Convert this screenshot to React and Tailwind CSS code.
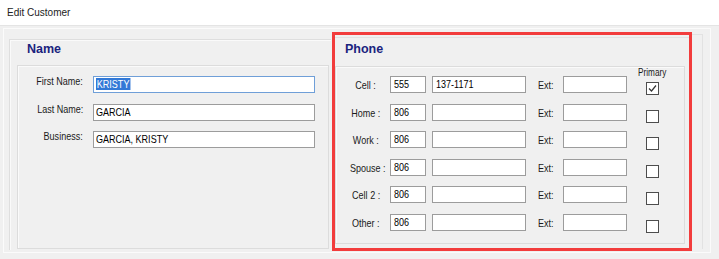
import React from "react";

const FONT = "font-['Liberation_Sans',Arial,sans-serif]";

function TL({ children, className = "" }) {
  return <span className={`inline-block whitespace-nowrap scale-x-[0.82] origin-left ${className}`}>{children}</span>;
}
function TR({ children }) {
  return <span className="inline-block whitespace-nowrap scale-x-[0.82] origin-right">{children}</span>;
}
function TC({ children }) {
  return <span className="inline-block whitespace-nowrap scale-x-[0.82] origin-center">{children}</span>;
}

function Box({ children, className = "", focus = false }) {
  return (
    <div
      className={`h-[17px] border ${focus ? "border-[#6f9fd8]" : "border-[#9c9c9c]"} bg-white text-[11px] leading-[15px] text-black whitespace-nowrap overflow-hidden ${className}`}
    >
      {children}
    </div>
  );
}

function Check({ checked }) {
  return (
    <div className="w-[13px] h-[13px] border border-[#4d4d4d] bg-white">
      {checked && (
        <svg width="11" height="11" viewBox="0 0 11 11" className="block">
          <path d="M2 5.5 L4.5 8 L9 2.5" fill="none" stroke="#333" strokeWidth="1.2" />
        </svg>
      )}
    </div>
  );
}

function NameRow({ label, children, focus }) {
  return (
    <div className="flex h-[17px] items-start">
      <div className="w-[65px] text-right text-[11px] leading-[11px] text-[#1a1a1a]">
        <TR>{label}</TR>
      </div>
      <Box className="ml-[10px] w-[222px] pl-[2px]" focus={focus}>
        {children}
      </Box>
    </div>
  );
}

function PhoneRow({ label, area, number, primary, first }) {
  return (
    <div className="flex h-[17px] items-start">
      <div className="w-[40px] pt-[1px] text-center text-[11px] leading-[17px] text-[#1a1a1a]">
        <TC>{label}</TC>
      </div>
      <Box className="ml-[4px] w-[36px] pl-[3px]">
        <TL>{area}</TL>
      </Box>
      <Box className="ml-[6px] w-[94px] pl-[3px]">
        <TL>{number}</TL>
      </Box>
      <div className="ml-[12px] w-[25px] pt-[1px] text-[11px] leading-[17px] text-[#1a1a1a]">
        <TL>Ext:</TL>
      </div>
      <Box className="w-[64px]" />
      {first ? (
        <div className="ml-[19px] w-[13px] -mt-[9px] flex flex-col items-center">
          <div className="h-[11px] text-[10px] leading-[11px] text-[#1a1a1a]">
            <TC>Primary</TC>
          </div>
          <div className="mt-[4px]">
            <Check checked={primary} />
          </div>
        </div>
      ) : (
        <div className="ml-[19px] mt-[6px]">
          <Check checked={primary} />
        </div>
      )}
    </div>
  );
}

export default function App() {
  return (
    <div className={`w-[719px] h-[259px] overflow-hidden bg-[#f0f0f0] ${FONT}`}>
      <div className="h-[26px] bg-white border-b border-[#e4e4e4] pl-[7px] pt-[6px] text-[10px] leading-[13px] text-[#222]">
        Edit Customer
      </div>
      <div className="pl-[3px] pt-[2px]">
        <div className="w-[708px] h-[225px] border border-[#fbfbfb] flex">
          {/* Name group */}
          <div className="ml-[5px] mt-[10px] w-[322px] h-[211px] border-l border-t border-[#dedede] shadow-[inset_1px_1px_0_#fafafa] flex flex-col">
            <div className="h-[25px] pl-[17px] pt-[2px] text-[12.5px] leading-[15px] font-bold text-[#1a237e]">
              Name
            </div>
            <div className="ml-[7px] mr-[2px] mb-[1px] flex-1 border border-[#dcdcdc] shadow-[inset_1px_1px_0_#fafafa] pt-[10px] flex flex-col gap-[10.5px]">
              <NameRow label="First Name:" focus>
                <span className="inline-block mt-[1px] whitespace-nowrap scale-x-[0.82] origin-left bg-[#3279d7] text-white leading-[12px] px-[1px]">
                  KRISTY
                </span>
              </NameRow>
              <NameRow label="Last Name:">
                <TL>GARCIA</TL>
              </NameRow>
              <NameRow label="Business:">
                <TL>GARCIA, KRISTY</TL>
              </NameRow>
            </div>
          </div>

          {/* Phone group (highlighted) */}
          <div className="ml-[1px] mt-[3px] w-[360px] h-[219px] border-[3px] border-[#f23c3c] flex flex-col">
            <div className="mt-[2px] flex-1 border-t border-[#e2e2e2] flex flex-col">
              <div className="h-[28px] pl-[10px] pt-[4px] text-[12.5px] leading-[15px] font-bold text-[#1a237e]">
                Phone
              </div>
              <div className="w-[350px] h-[178px] border border-[#dcdcdc] shadow-[inset_1px_1px_0_#fafafa] pt-[9px] pl-[10px] flex flex-col gap-[10.5px]">
                <PhoneRow label="Cell :" area="555" number="137-1171" primary first />
                <PhoneRow label="Home :" area="806" />
                <PhoneRow label="Work :" area="806" />
                <PhoneRow label="Spouse :" area="806" />
                <PhoneRow label="Cell 2 :" area="806" />
                <PhoneRow label="Other :" area="806" />
              </div>
            </div>
          </div>

          <div className="w-[11px] mt-[5px] mb-[3px] border-r border-t border-[#e2e2e2]" />
        </div>
      </div>
    </div>
  );
}
